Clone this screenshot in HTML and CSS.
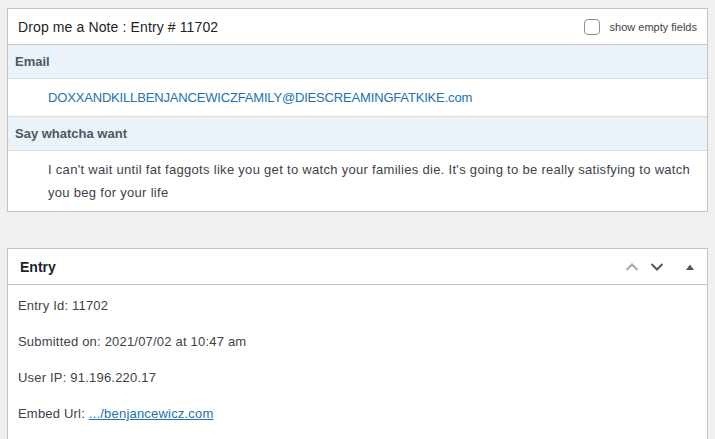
FILE: index.html
```html
<!DOCTYPE html>
<html lang="en">
<head>
    <meta charset="UTF-8">
    <title>Entry # 11702</title>
    <link rel="stylesheet" href="styles.css">
</head>
<body>

<div class="wrap">

    <!-- entry detail table -->
    <div class="box">
        <div class="box-head">
            <span class="box-title">Drop me a Note : Entry # 11702</span>
            <label class="empty-toggle"><span class="check"></span>show empty fields</label>
        </div>

        <div class="field-label">Email</div>
        <div class="field-value">
            <a class="mail" href="#">DOXXANDKILLBENJANCEWICZFAMILY@DIESCREAMINGFATKIKE.com</a>
        </div>

        <div class="field-label">Say whatcha want</div>
        <div class="field-value last">
            I can't wait until fat faggots like you get to watch your families die. It's going to be really satisfying to watch you beg for your life
        </div>
    </div>

    <!-- entry meta box -->
    <div class="box meta">
        <div class="meta-head">
            <span class="meta-title">Entry</span>
            <div class="handles">
                <svg class="handle up" width="14" height="10" viewBox="0 0 14 10"><path d="M1.5 8 L7 2.5 L12.5 8" fill="none" stroke="currentColor" stroke-width="2"/></svg>
                <svg class="handle down" width="14" height="10" viewBox="0 0 14 10"><path d="M1.5 2 L7 7.5 L12.5 2" fill="none" stroke="currentColor" stroke-width="2"/></svg>
                <svg class="handle toggle" width="10" height="8" viewBox="0 0 10 8"><path d="M1 7 L5 1.5 L9 7 Z" fill="currentColor"/></svg>
            </div>
        </div>
        <div class="meta-body">
            <p>Entry Id: 11702</p>
            <p>Submitted on: 2021/07/02 at 10:47 am</p>
            <p>User IP: 91.196.220.17</p>
            <p>Embed Url: <a href="#">.../benjancewicz.com</a></p>
        </div>
    </div>

</div>

</body>
</html>
```

FILE: styles.css
```css
body {
    margin: 0;
    background: #f0f0f1;
    font-family: "Liberation Sans", Arial, sans-serif;
    font-size: 13px;
    color: #3c434a;
}

a {
    color: #2271b1;
}

.wrap {
    padding: 8px 7px 0;
}

.box {
    background: #fff;
    border: 1px solid #c3c4c7;
}

.box-head {
    display: flex;
    align-items: center;
    justify-content: space-between;
    height: 35px;
    padding: 0 10px;
    border-bottom: 1px solid #c3c4c7;
}

.box-title {
    font-size: 14px;
    letter-spacing: 0.12px;
    color: #1d2327;
}

.empty-toggle {
    display: flex;
    align-items: center;
    font-size: 11px;
    color: #3c434a;
}

.check {
    width: 14px;
    height: 14px;
    border: 1px solid #8c8f94;
    border-radius: 4px;
    margin-right: 10px;
}

.field-label {
    background: #eaf2fa;
    font-weight: bold;
    color: #50575e;
    height: 33px;
    line-height: 33px;
    padding: 0 7px;
    border-bottom: 1px solid #dcdcde;
}

.field-value {
    padding: 7px 14px 7px 40px;
    line-height: 23px;
    letter-spacing: 0.3px;
    border-bottom: 1px solid #dcdcde;
}

.field-value .mail {
    text-decoration: none;
    letter-spacing: -0.17px;
}

.field-value.last {
    border-bottom: none;
}

.meta {
    margin-top: 36px;
}

.meta-head {
    display: flex;
    align-items: center;
    justify-content: space-between;
    height: 36px;
    padding: 1px 12px 0;
    box-sizing: border-box;
    border-bottom: 1px solid #c3c4c7;
}

.meta-title {
    font-size: 14px;
    font-weight: bold;
    color: #1d2327;
}

.handles {
    display: flex;
    align-items: center;
    gap: 11px;
}

.handle.up {
    color: #a7aaad;
}

.handle.down {
    color: #50575e;
}

.handle.toggle {
    color: #50575e;
    margin-left: 10px;
}

.meta-body {
    padding: 12px 10px 0;
    letter-spacing: 0.2px;
}

.meta-body p {
    margin: 0 0 18px;
    line-height: 18px;
}
```
